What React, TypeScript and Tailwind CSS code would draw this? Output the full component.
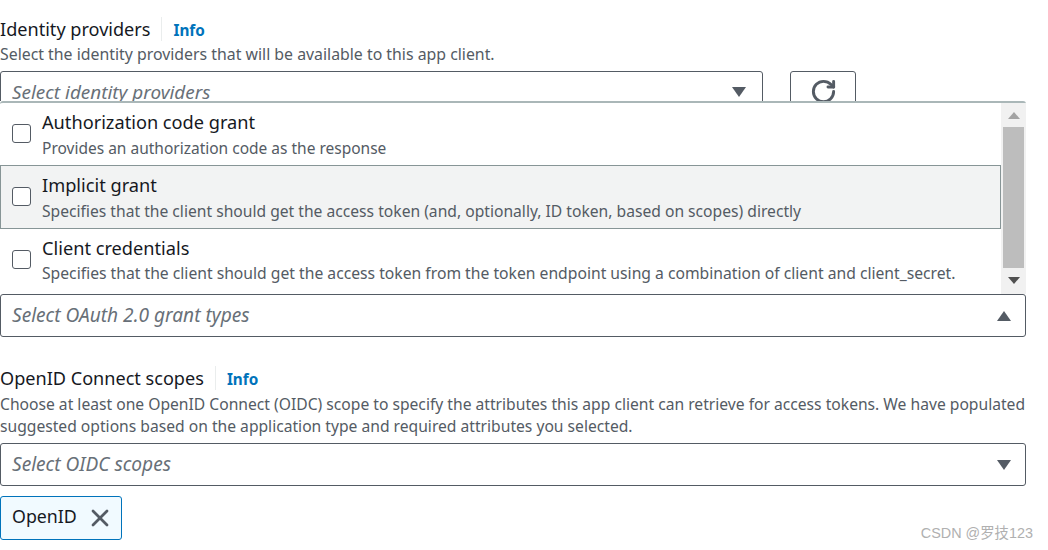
import React from "react";
import { RotateCw, X } from "lucide-react";

const font = "font-['Noto_Sans','Open_Sans',sans-serif]";

function Caret({ up = false }: { up?: boolean }) {
  return (
    <svg width="16" height="12" viewBox="0 0 16 12" className="shrink-0">
      {up ? <path d="M8 1 L15 11 L1 11 Z" fill="#545b64" /> : <path d="M1 1 L15 1 L8 11 Z" fill="#545b64" />}
    </svg>
  );
}

function Label({ title, desc, descClass }: { title: string; desc: React.ReactNode; descClass: string }) {
  return (
    <div>
      <div className="flex items-center h-[26px]">
        <span className="text-[18.1px] leading-[26px] text-[#16191f]">{title}</span>
        <span className="ml-[11px] h-[24px] border-l border-[#eaeded]" />
        <span className="ml-[11px] mt-[2px] text-[15.3px] font-bold text-[#0073bb]">Info</span>
      </div>
      <div className={`leading-[22px] text-[#545b64] whitespace-nowrap ${descClass}`}>{desc}</div>
    </div>
  );
}

function SelectBox({ text, up = false }: { text: string; up?: boolean }) {
  return (
    <div className="h-[43px] w-[1026px] flex items-center justify-between pl-[11px] pr-[13px] bg-white border border-[#545b64] rounded-[3px]">
      <span className="text-[19.1px] italic text-[#687078]">{text}</span>
      <Caret up={up} />
    </div>
  );
}

function Option({ title, desc, descClass, active = false }: { title: string; desc: string; descClass: string; active?: boolean }) {
  return (
    <div className={`h-[64px] -mb-[1px] flex items-center pl-[11px] border ${active ? "bg-[#f2f3f3] border-[#879596]" : "border-transparent"}`}>
      <span className="w-[19px] h-[19px] -mt-[2px] shrink-0 bg-white border-[1.5px] border-[#545b64] rounded-[3px]" />
      <div className="ml-[11px] -mt-[2px] min-w-0">
        <div className="text-[18.2px] leading-[26px] text-[#16191f]">{title}</div>
        <div className={`leading-[20px] text-[#545b64] whitespace-nowrap ${descClass}`}>{desc}</div>
      </div>
    </div>
  );
}

export default function App() {
  return (
    <div className={`relative w-[1048px] h-[550px] overflow-hidden bg-white pt-[16px] ${font}`}>
      <Label
        title="Identity providers"
        descClass="mt-[1px] text-[15.85px]"
        desc="Select the identity providers that will be available to this app client."
      />

      {/* select + refresh, cut off by the open dropdown */}
      <div className="mt-[6px] h-[30px] overflow-hidden flex">
        <div className="h-[43px] w-[763px] flex items-center justify-between pl-[11px] pr-[15px] border border-[#545b64] rounded-[3px]">
          <span className="text-[18.9px] italic text-[#687078]">Select identity providers</span>
          <span className="-mt-[1px]"><Caret /></span>
        </div>
        <div className="ml-[27px] h-[43px] w-[66px] flex items-center justify-center border border-[#545b64] rounded-[3px]">
          <RotateCw size={27} strokeWidth={2.6} color="#545b64" className="-mt-[2px]" />
        </div>
      </div>

      {/* dropdown */}
      <div className="w-[1026px] h-[193px] flex border-t-2 border-[#aab7b8] rounded-t-[3px]">
        <div className="w-[1001px] -mt-[1px] shrink-0">
          <Option title="Authorization code grant" descClass="mt-[3px] text-[15.5px]" desc="Provides an authorization code as the response" />
          <Option active title="Implicit grant" descClass="mt-[3px] text-[15.65px]" desc="Specifies that the client should get the access token (and, optionally, ID token, based on scopes) directly" />
          <Option title="Client credentials" descClass="mt-[2px] text-[15.7px]" desc="Specifies that the client should get the access token from the token endpoint using a combination of client and client_secret." />
        </div>
        <div className="flex-1 bg-[#f1f1f1] flex flex-col items-center">
          <svg width="12" height="7" viewBox="0 0 12 7" className="mt-[9px]"><path d="M6 0 L12 7 L0 7 Z" fill="#a3a3a3" /></svg>
          <div className="mt-[8px] w-[21px] h-[141px] bg-[#bdbdbd]" />
          <svg width="12" height="7" viewBox="0 0 12 7" className="mt-[9px]"><path d="M0 0 L12 0 L6 7 Z" fill="#505050" /></svg>
        </div>
      </div>

      <SelectBox text="Select OAuth 2.0 grant types" up />

      <div className="mt-[28px]">
        <Label
          title="OpenID Connect scopes"
          descClass="mt-[2px] text-[15.65px]"
          desc={
            <>
              Choose at least one OpenID Connect (OIDC) scope to specify the attributes this app client can retrieve for access tokens. We have populated
              <br />
              suggested options based on the application type and required attributes you selected.
            </>
          }
        />
      </div>

      <div className="mt-[6px]">
        <SelectBox text="Select OIDC scopes" />
      </div>

      <div className="mt-[10px] w-[122px] h-[44px] flex items-center pl-[11px] bg-[#f1faff] border border-[#0073bb] rounded-[3px]">
        <span className="text-[17.8px] text-[#16191f] -mt-[4px]">OpenID</span>
        <X size={28} strokeWidth={2.4} color="#545b64" className="ml-[9px]" />
      </div>

      {/* watermark */}
      <div className="absolute right-[15px] bottom-[7px] text-[14.4px] leading-[20px] text-[#b0b0b0] font-['Liberation_Sans','Noto_Sans_CJK_SC',sans-serif]">
        CSDN @罗技123
      </div>
    </div>
  );
}
